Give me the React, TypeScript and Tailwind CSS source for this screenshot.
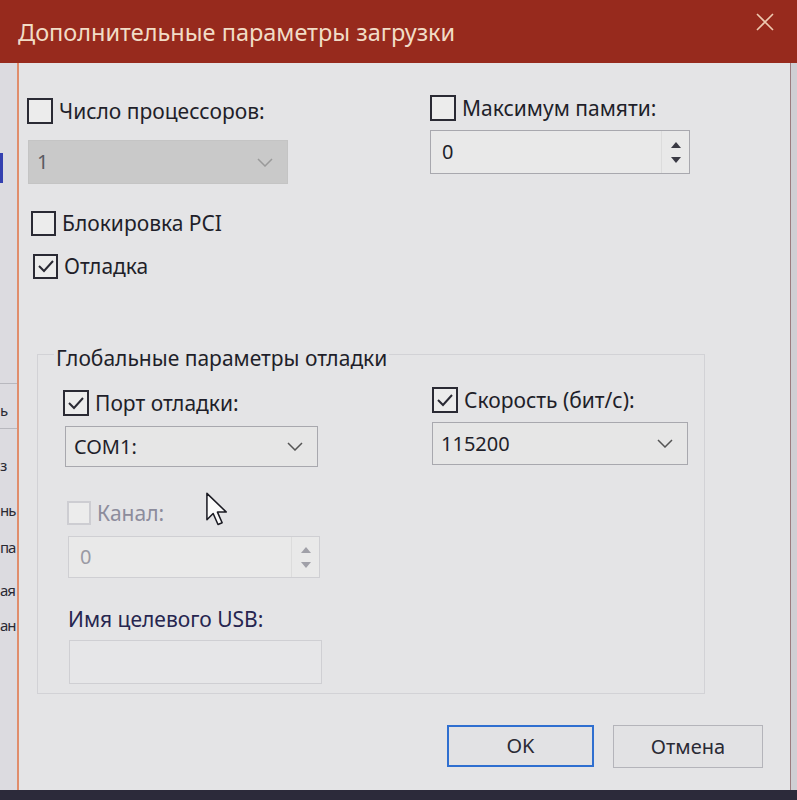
import React from "react";

const font = { fontFamily: '"Noto Sans", "Open Sans", sans-serif' };

const Check = ({
  checked = false,
  disabled = false,
  size = 26,
  label,
  className = "",
}: {
  checked?: boolean;
  disabled?: boolean;
  size?: number;
  label: string;
  className?: string;
}) => (
  <label className={`flex items-center gap-[6px] ${className}`}>
    <span
      className={`flex items-center justify-center border-2 bg-[#ececec] ${
        disabled ? "border-[#cdcdd2]" : "border-[#2a2a34]"
      }`}
      style={{ width: size, height: size }}
    >
      {checked && (
        <svg width="18" height="14" viewBox="0 0 18 14">
          <polyline points="2,7 7,12 16,2" fill="none" stroke="#2a2a34" strokeWidth="2" />
        </svg>
      )}
    </span>
    <span className={`text-[21px] leading-[26px] ${disabled ? "text-[#8c8c9c]" : "text-[#1f1f2a]"}`}>{label}</span>
  </label>
);

const Chevron = ({ color = "#555" }: { color?: string }) => (
  <svg width="16" height="9" viewBox="0 0 16 9">
    <polyline points="1,1 8,8 15,1" fill="none" stroke={color} strokeWidth="1.5" />
  </svg>
);

const Select = ({
  value,
  className = "",
  disabled = false,
}: {
  value: string;
  className?: string;
  disabled?: boolean;
}) => (
  <div
    className={`flex items-center justify-between pl-[8px] pr-[14px] border ${
      disabled ? "bg-[#c9c9c9] border-[#c4c4c4] text-[#5a5a62]" : "bg-[#e6e6e6] border-[#a8a8ae] text-[#1f1f2a]"
    } ${className}`}
  >
    <span className="text-[20px]">{value}</span>
    <Chevron color={disabled ? "#9a9a9a" : "#555"} />
  </div>
);

const Spinner = ({ value, className = "", disabled = false }: { value: string; className?: string; disabled?: boolean }) => (
  <div
    className={`flex items-stretch border ${
      disabled ? "border-[#cfcfd3] text-[#9a9aa4]" : "border-[#a8a8ae] text-[#1f1f2a]"
    } bg-[#e9e9e9] ${className}`}
  >
    <span className="flex-1 flex items-center pl-[11px] text-[20px]">{value}</span>
    <span className="w-[28px] flex flex-col items-center justify-center gap-[9px] border-l border-[#dcdcdc]">
      <svg width="10" height="6" viewBox="0 0 10 6">
        <polygon points="0,6 5,0 10,6" fill={disabled ? "#a0a0a8" : "#3a3a44"} />
      </svg>
      <svg width="10" height="6" viewBox="0 0 10 6">
        <polygon points="0,0 10,0 5,6" fill={disabled ? "#a0a0a8" : "#3a3a44"} />
      </svg>
    </span>
  </div>
);

export default function App() {
  return (
    <div className="w-[797px] h-[800px] overflow-hidden flex flex-col bg-[#2c2a3a]" style={font}>
      {/* title bar */}
      <header className="h-[63px] bg-[#972a1d] flex items-center justify-between pl-[18px] pr-[22px] pt-[2px]">
        <h1 className="text-[23.5px] text-[#f1dcc6]">Дополнительные параметры загрузки</h1>
        <svg width="20" height="20" viewBox="0 0 20 20" className="mb-[22px]">
          <path d="M2 2 L18 18 M18 2 L2 18" stroke="#eec9b0" strokeWidth="1.6" />
        </svg>
      </header>

      <div className="flex flex-1">
        {/* window behind */}
        <div className="w-[17px] bg-[#dcdbe0] flex flex-col items-start overflow-hidden text-[15px] tracking-[-1px] text-[#2a2a34] whitespace-nowrap">
          <div className="mt-[90px] h-[30px] w-[3px] bg-[#3440b0]" />
          <div className="mt-[200px] h-px w-full bg-[#b8b8be]" />
          <div className="mt-[16px] leading-[20px]">ь</div>
          <div className="mt-[8px] h-px w-full bg-[#b8b8be]" />
          <div className="mt-[26px] leading-[20px]">з</div>
          <div className="mt-[25px] leading-[20px]">нь</div>
          <div className="mt-[17px] leading-[20px]">па</div>
          <div className="mt-[23px] leading-[20px]">ая</div>
          <div className="mt-[15px] leading-[20px]">ан</div>
        </div>
        <div className="w-[2px] bg-[#e08d6c]" />

        <main className="relative flex-1 flex flex-col bg-[#e4e4e6]">
          {/* top options */}
          <div className="grid grid-cols-[403px_1fr] ml-[8px] mt-[32px]">
            <div className="flex flex-col items-start">
              <Check label="Число процессоров:" className="mt-[3px]" />
              <Select value="1" disabled className="mt-[16px] ml-px w-[260px] h-[44px]" />
              <Check label="Блокировка PCI" size={25} className="mt-[26px] ml-[4px]" />
              <Check label="Отладка" checked size={25} className="mt-[17px] ml-[6px]" />
            </div>
            <div className="flex flex-col items-start">
              <Check label="Максимум памяти:" />
              <Spinner value="0" className="mt-[9px] w-[260px] h-[44px]" />
            </div>
          </div>

          {/* global debug settings */}
          <fieldset className="mt-[62px] ml-[18px] w-[668px] h-[353px] border border-[#d2d2d6] p-0">
            <legend className="ml-[16px] px-[2px] text-[21px] leading-[26px] text-[#1f1f2a] translate-y-[4px]">
              Глобальные параметры отладки
            </legend>
            <div className="grid grid-cols-[369px_1fr] ml-[25px] mt-[20px]">
              <div className="flex flex-col items-start mt-[3px]">
                <Check label="Порт отладки:" checked />
                <Select value="COM1:" className="mt-[10px] ml-[2px] w-[253px] h-[41px]" />
                <Check label="Канал:" disabled size={24} className="mt-[33px] ml-[4px]" />
                <Spinner value="0" disabled className="mt-[10px] ml-[5px] w-[252px] h-[42px]" />
                <span className="mt-[29px] ml-[5px] text-[21px] leading-[24px] text-[#262650]">Имя целевого USB:</span>
                <div className="mt-[9px] ml-[6px] w-[253px] h-[44px] border border-[#cfcfd3] bg-[#e6e6e8]" />
              </div>
              <div className="flex flex-col items-start">
                <Check label="Скорость (бит/с):" checked />
                <Select value="115200" className="mt-[9px] w-[256px] h-[43px]" />
              </div>
            </div>
          </fieldset>

          {/* buttons */}
          <div className="flex justify-end gap-[19px] mt-[31px] pr-[27px]">
            <button className="w-[147px] h-[42px] border-2 border-[#2f6fd0] bg-[#e2e2e4] text-[20px] text-[#2a2a34]">
              OK
            </button>
            <button className="w-[150px] h-[43px] border border-[#b4b4ba] bg-[#e2e2e4] text-[20px] text-[#2a2a34]">
              Отмена
            </button>
          </div>

          {/* mouse pointer */}
          <svg
            className="absolute left-[186px] top-[429px]"
            width="26"
            height="36"
            viewBox="0 0 18 26"
          >
            <path
              d="M1 1 L1 20 L5.5 15.5 L9 23.5 L12 22.2 L8.6 14.5 L15 14.5 Z"
              fill="#fafafa"
              stroke="#1a1a22"
              strokeWidth="1.1"
              strokeLinejoin="round"
            />
          </svg>
        </main>

        <div className="w-px bg-[#9c7c80]" />
        <div className="w-[6px] bg-[#cfcfd4]" />
      </div>
      <div className="h-[10px] bg-[#2c2a3a]" />
    </div>
  );
}
